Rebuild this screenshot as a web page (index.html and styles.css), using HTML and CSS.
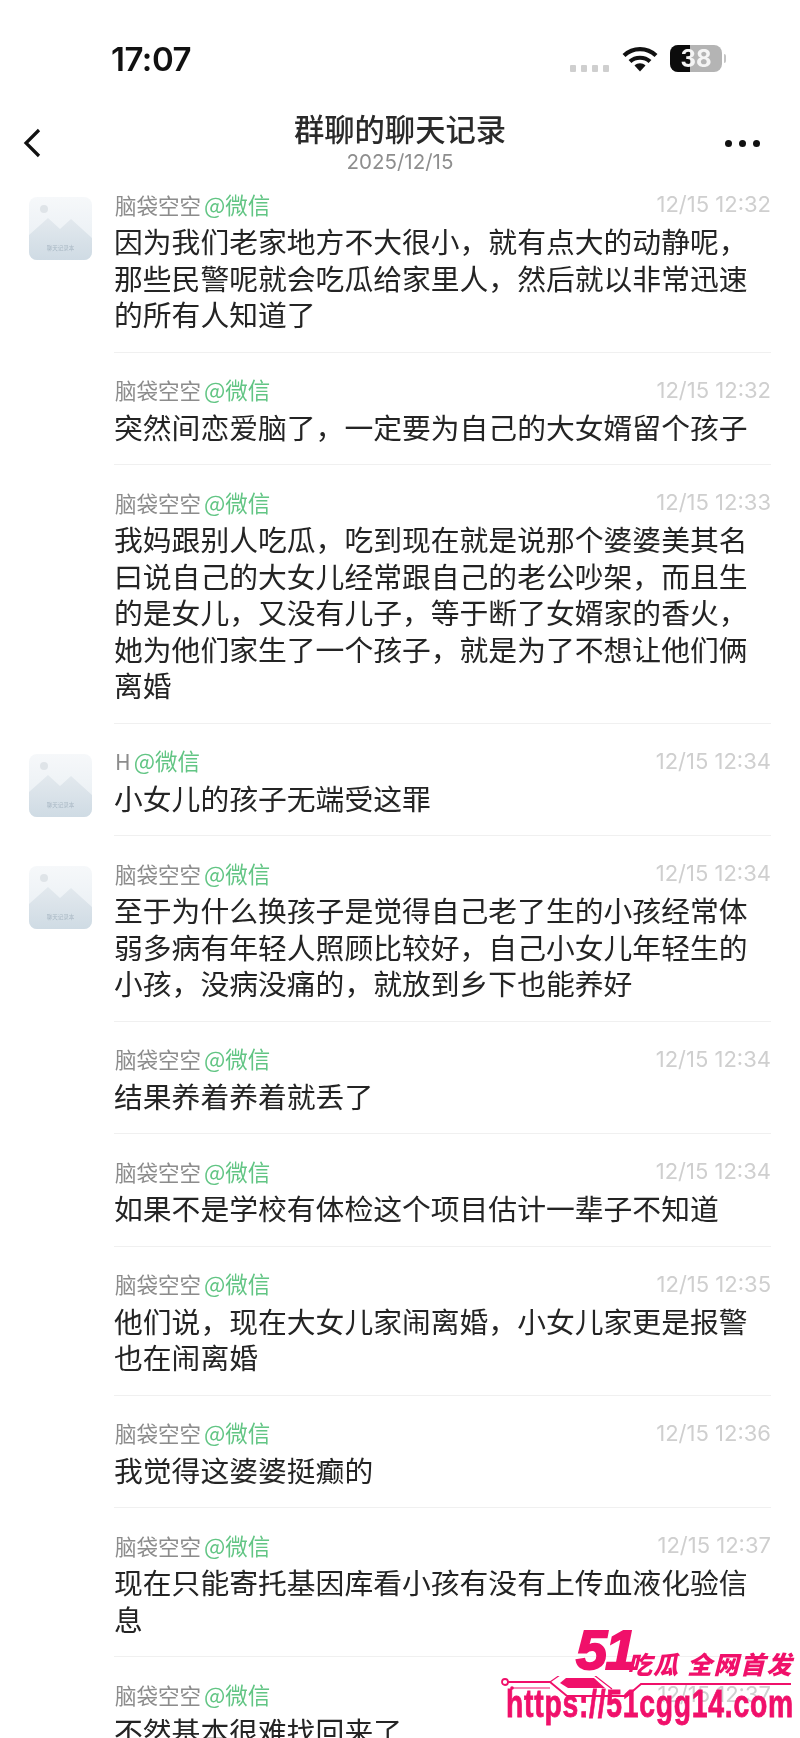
FILE: index.html
```html
<!DOCTYPE html>
<html lang="zh-CN">
<head>
<meta charset="utf-8">
<title>群聊的聊天记录</title>
<link rel="stylesheet" href="styles.css">
</head>
<body>
<div class="page">
  <header class="status">
    <span class="clock">17:07</span>
    <div class="status-icons">
      <div class="signal"><i></i><i></i><i></i><i></i></div>
      <svg class="wifi" viewBox="0 0 36 26" width="36" height="26"><path d="M2 9.500C11 1 25 1 34 9.500" fill="none" stroke="#111" stroke-width="4.200"/><path d="M8 15.500C13.500 10.500 22.500 10.500 28 15.500" fill="none" stroke="#111" stroke-width="4.200"/><path d="M12.500 19.500C15.500 16.500 20.500 16.500 23.500 19.500L18 25.500Z" fill="#111"/></svg>
      <div class="battery"><div class="battery-fill"></div><span class="battery-num">38</span></div>
      <div class="battery-cap"></div>
    </div>
  </header>
  <nav class="nav">
    <svg class="back" viewBox="0 0 20 30" width="20" height="30"><path d="M17 2 4 15l13 13" fill="none" stroke="#111" stroke-width="3.200"/></svg>
    <div class="nav-title">
      <div class="title">群聊的聊天记录</div>
      <div class="date">2025/12/15</div>
    </div>
    <div class="more"><i></i><i></i><i></i></div>
  </nav>
  <main class="list">
    <article class="row">
      <svg class="avatar" viewBox="0 0 63 63"><defs><linearGradient id="g1" x1="0" y1="0" x2="0" y2="1"><stop offset="0" stop-color="#f6f8fa"/><stop offset="1" stop-color="#e6edf2"/></linearGradient><linearGradient id="g2" x1="0" y1="0" x2="0" y2="1"><stop offset="0" stop-color="#e3e9ee"/><stop offset="1" stop-color="#cfdbe4"/></linearGradient></defs><rect width="63" height="63" rx="8" fill="url(#g1)"/><circle cx="15" cy="12" r="4" fill="#dfe4e8"/><path d="M0 38 19 21l12 11 11-10 21 19v14a8 8 0 0 1-8 8H8a8 8 0 0 1-8-8Z" fill="url(#g2)"/><text x="31.500" y="53" text-anchor="middle" class="avatar-text">聊天记录本</text></svg>
      <div class="body">
        <div class="meta"><span class="name">脑袋空空<b>@微信</b></span><time>12/15 12:32</time></div>
        <p class="text">因为我们老家地方不大很小，就有点大的动静呢，那些民警呢就会吃瓜给家里人，然后就以非常迅速的所有人知道了</p>
      </div>
    </article>
    <article class="row">
      <div class="body">
        <div class="meta"><span class="name">脑袋空空<b>@微信</b></span><time>12/15 12:32</time></div>
        <p class="text">突然间恋爱脑了，一定要为自己的大女婿留个孩子</p>
      </div>
    </article>
    <article class="row">
      <div class="body">
        <div class="meta"><span class="name">脑袋空空<b>@微信</b></span><time>12/15 12:33</time></div>
        <p class="text">我妈跟别人吃瓜，吃到现在就是说那个婆婆美其名曰说自己的大女儿经常跟自己的老公吵架，而且生的是女儿，又没有儿子，等于断了女婿家的香火，她为他们家生了一个孩子，就是为了不想让他们俩离婚</p>
      </div>
    </article>
    <article class="row">
      <svg class="avatar" viewBox="0 0 63 63"><rect width="63" height="63" rx="8" fill="url(#g1)"/><circle cx="15" cy="12" r="4" fill="#dfe4e8"/><path d="M0 38 19 21l12 11 11-10 21 19v14a8 8 0 0 1-8 8H8a8 8 0 0 1-8-8Z" fill="url(#g2)"/><text x="31.500" y="53" text-anchor="middle" class="avatar-text">聊天记录本</text></svg>
      <div class="body">
        <div class="meta"><span class="name">H<b>@微信</b></span><time>12/15 12:34</time></div>
        <p class="text">小女儿的孩子无端受这罪</p>
      </div>
    </article>
    <article class="row">
      <svg class="avatar" viewBox="0 0 63 63"><rect width="63" height="63" rx="8" fill="url(#g1)"/><circle cx="15" cy="12" r="4" fill="#dfe4e8"/><path d="M0 38 19 21l12 11 11-10 21 19v14a8 8 0 0 1-8 8H8a8 8 0 0 1-8-8Z" fill="url(#g2)"/><text x="31.500" y="53" text-anchor="middle" class="avatar-text">聊天记录本</text></svg>
      <div class="body">
        <div class="meta"><span class="name">脑袋空空<b>@微信</b></span><time>12/15 12:34</time></div>
        <p class="text">至于为什么换孩子是觉得自己老了生的小孩经常体弱多病有年轻人照顾比较好，自己小女儿年轻生的小孩，没病没痛的，就放到乡下也能养好</p>
      </div>
    </article>
    <article class="row">
      <div class="body">
        <div class="meta"><span class="name">脑袋空空<b>@微信</b></span><time>12/15 12:34</time></div>
        <p class="text">结果养着养着就丢了</p>
      </div>
    </article>
    <article class="row">
      <div class="body">
        <div class="meta"><span class="name">脑袋空空<b>@微信</b></span><time>12/15 12:34</time></div>
        <p class="text">如果不是学校有体检这个项目估计一辈子不知道</p>
      </div>
    </article>
    <article class="row">
      <div class="body">
        <div class="meta"><span class="name">脑袋空空<b>@微信</b></span><time>12/15 12:35</time></div>
        <p class="text">他们说，现在大女儿家闹离婚，小女儿家更是报警也在闹离婚</p>
      </div>
    </article>
    <article class="row">
      <div class="body">
        <div class="meta"><span class="name">脑袋空空<b>@微信</b></span><time>12/15 12:36</time></div>
        <p class="text">我觉得这婆婆挺癫的</p>
      </div>
    </article>
    <article class="row">
      <div class="body">
        <div class="meta"><span class="name">脑袋空空<b>@微信</b></span><time>12/15 12:37</time></div>
        <p class="text">现在只能寄托基因库看小孩有没有上传血液化验信息</p>
      </div>
    </article>
    <article class="row">
      <div class="body">
        <div class="meta"><span class="name">脑袋空空<b>@微信</b></span><time>12/15 12:37</time></div>
        <p class="text">不然基本很难找回来了</p>
      </div>
    </article>
  </main>
  <aside class="mark">
    <span class="mark-51">51</span>
    <span class="mark-a">吃瓜</span>
    <span class="mark-b">全网首发</span>
    <svg class="mark-lines" viewBox="0 0 300 24" width="300" height="24"><circle cx="5" cy="6" r="3" fill="none" stroke="#f0106a" stroke-width="1.800"/><circle cx="12" cy="12" r="1.800" fill="#f0106a"/><path d="M8 6h42l17 14h60l14-12h150" fill="none" stroke="#f0106a" stroke-width="1.800"/><path d="M12 12h38M50 6l10-7h34l18 14" fill="none" stroke="#f0106a" stroke-width="1.200"/><path d="M60 7l6-5h28l11 10H68Z" fill="#f0106a"/></svg>
    <span class="mark-url">https://51cgg14.com</span>
  </aside>
</div>
</body>
</html>
```
FILE: styles.css
```css
* { box-sizing: border-box; }
html, body { margin: 0; height: 1738px; overflow: hidden; background: #fff; }
.page {
  position: relative;
  width: 800px;
  height: 1738px;
  overflow: hidden;
  background: #fff;
  font-family: "Noto Sans CJK SC", "Liberation Sans", sans-serif;
  color: #222;
  filter: blur(0.45px);
}
.status {
  height: 112px;
  padding: 39px 74px 0 111px;
  display: flex;
  justify-content: space-between;
  align-items: flex-start;
}
.clock {
  font-family: Inter, "Liberation Sans", sans-serif;
  font-weight: 600;
  font-size: 33px;
  line-height: 40px;
  color: #111;
  letter-spacing: -0.5px;
}
.status-icons { display: flex; align-items: center; margin-top: 6px; height: 27px; }
.signal { display: flex; gap: 5px; margin-top: 19px; margin-right: 13px; }
.signal i { width: 6px; height: 7px; background: #cfcfcf; border-radius: 1px; }
.wifi { margin-right: 12px; }
.battery {
  position: relative;
  width: 52px;
  height: 27px;
  border-radius: 8px;
  background: #b4b4b4;
  display: flex;
  justify-content: center;
  align-items: center;
}
.battery-fill { position: absolute; left: 0; top: 0; bottom: 0; width: 20px; background: #0c0c0c; border-radius: 8px 0 0 8px; }
.battery-num {
  position: relative;
  font-family: Inter, "Liberation Sans", sans-serif;
  font-weight: 700;
  font-size: 24px;
  line-height: 26px;
  color: #f4f4f4;
}
.battery-cap { width: 2px; height: 9px; margin-left: 2px; background: #c4c4c4; border-radius: 0 2px 2px 0; }
.nav {
  height: 55px;
  padding: 0 40px 0 22px;
  display: flex;
  justify-content: space-between;
  align-items: center;
  position: relative;
}
.back { margin-top: 6px; }
.nav-title {
  position: absolute;
  left: 0;
  right: 0;
  top: -3px;
  text-align: center;
}
.title { font-size: 30.300px; font-weight: 500; line-height: 38px; color: #2a2a2a; }
.date { font-family: Inter, "Liberation Sans", sans-serif; font-size: 20.500px; line-height: 26px; margin-top: 2px; color: #8e8e8e; }
.more { display: flex; gap: 7px; margin-top: 8px; }
.more i { width: 7px; height: 7px; border-radius: 50%; background: #111; }
.list { padding-left: 114px; padding-right: 29px; }
.row { position: relative; border-bottom: 1px solid #f0f0f0; padding: 23px 0 19px; }
.avatar { position: absolute; left: -85px; top: 30px; width: 63px; height: 63px; display: block; }
.avatar-text { font-size: 5.500px; fill: #a9b8c4; }
.meta { display: flex; justify-content: space-between; align-items: center; height: 28px; margin-left: 1px; }
.name { font-size: 21.500px; line-height: 28px; color: #8c8c8c; }
.name b { font-weight: 400; font-size: 22.500px; color: #62c584; margin-left: 3px; }
time { font-family: Inter, "Liberation Sans", sans-serif; font-size: 22px; line-height: 28px; color: #cfcfcf; }
.text { margin: 5px 0 0; font-size: 28.800px; line-height: 36.500px; width: 645px; color: #242424; }
.mark { position: absolute; left: 500px; top: 1620px; width: 300px; height: 118px; color: #f0106a; }
.mark-51 {
  position: absolute;
  left: 76px;
  top: 0;
  font-family: "Liberation Sans", sans-serif;
  font-weight: 700;
  font-style: italic;
  font-size: 56px;
  line-height: 60px;
  letter-spacing: -2px;
  -webkit-text-stroke: 2px #f0106a;
}
.mark-a, .mark-b {
  position: absolute;
  top: 26px;
  font-weight: 900;
  font-style: italic;
  font-size: 25px;
  line-height: 34px;
  letter-spacing: 1px;
}
.mark-a { left: 127px; }
.mark-b { left: 187px; letter-spacing: 1.500px; }
.mark-lines { position: absolute; left: 0; top: 56px; }
.mark-url {
  position: absolute;
  left: 6px;
  top: 63px;
  font-family: "Liberation Sans", sans-serif;
  font-weight: 700;
  font-size: 38px;
  line-height: 42px;
  letter-spacing: 1px;
  -webkit-text-stroke: 0.8px #f0106a;
  white-space: nowrap;
  transform: scaleX(0.745);
  transform-origin: left center;
}
```
